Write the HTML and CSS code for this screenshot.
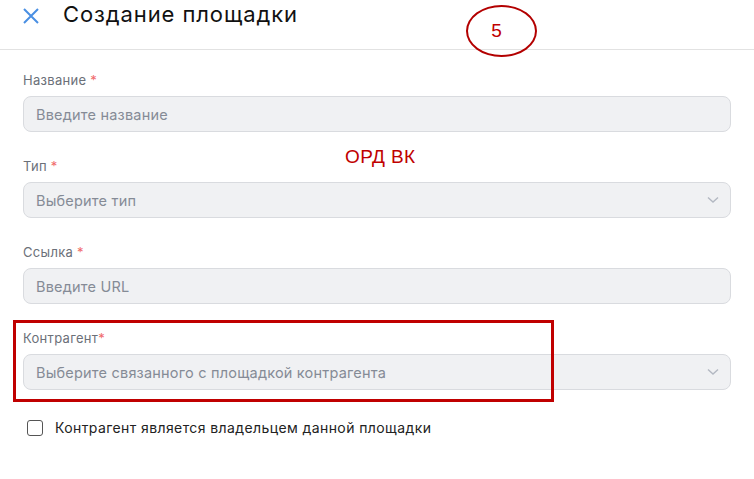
FILE: index.html
```html
<!DOCTYPE html>
<html lang="ru">
<head>
<meta charset="utf-8">
<link rel="stylesheet" href="styles.css">
</head>
<body>
<div class="page">
  <header class="header">
    <svg class="close" width="16" height="16" viewBox="0 0 16 16"><path d="M1 1 L15 15 M15 1 L1 15" stroke="#4a8fe3" stroke-width="2" fill="none"/></svg>
    <h1 class="title">Создание площадки</h1>
  </header>
  <form class="form">
    <div class="field">
      <label class="label">Название <span class="req">*</span></label>
      <div class="input"><span class="ph">Введите название</span></div>
    </div>
    <div class="field">
      <label class="label">Тип <span class="req">*</span></label>
      <div class="input select"><span class="ph">Выберите тип</span><svg class="chev" width="12" height="8" viewBox="0 0 12 8"><path d="M1 1.5 L6 6 L11 1.5" stroke="#b3b8c2" stroke-width="1.4" fill="none"/></svg></div>
    </div>
    <div class="field">
      <label class="label">Ссылка <span class="req">*</span></label>
      <div class="input"><span class="ph">Введите URL</span></div>
    </div>
    <div class="field">
      <label class="label">Контрагент<span class="req">*</span></label>
      <div class="input select"><span class="ph">Выберите связанного с площадкой контрагента</span><svg class="chev" width="12" height="8" viewBox="0 0 12 8"><path d="M1 1.5 L6 6 L11 1.5" stroke="#b3b8c2" stroke-width="1.4" fill="none"/></svg></div>
    </div>
    <label class="check"><span class="box"></span><span class="check-text">Контрагент является владельцем данной площадки</span></label>
  </form>
  <div class="note-ellipse"><span>5</span></div>
  <div class="note-text">ОРД ВК</div>
  <div class="note-box"></div>
</div>
</body>
</html>
```
FILE: styles.css
```css
html, body {
  margin: 0;
  padding: 0;
  background: #fff;
}
.page {
  position: relative;
  width: 754px;
  height: 479px;
  overflow: hidden;
  font-family: "Inter", "Noto Sans", sans-serif;
}
.header {
  height: 49px;
  border-bottom: 1px solid #e2e2e2;
  display: flex;
  align-items: flex-start;
  padding: 0 0 0 23px;
  box-sizing: content-box;
}
.close {
  margin-top: 8px;
  flex: none;
}
.title {
  margin: 0 0 0 24px;
  font-size: 22px;
  font-weight: 400;
  line-height: 29px;
  color: #111;
  letter-spacing: 0.9px;
}
.form {
  padding: 22px 23px 0 23px;
  display: flex;
  flex-direction: column;
}
.field {
  display: flex;
  flex-direction: column;
  margin-bottom: 26px;
}
.label {
  font-size: 13px;
  line-height: 16px;
  color: #6b7079;
  margin-bottom: 8px;
  letter-spacing: 0.3px;
}
.req {
  color: #f06a6a;
}
.input {
  height: 36px;
  box-sizing: border-box;
  width: 708px;
  background: #f0f1f3;
  border: 1px solid #d9dbdf;
  border-radius: 8px;
  display: flex;
  align-items: center;
  padding: 0 11px 0 12px;
}
.ph {
  font-size: 14.5px;
  color: #858b96;
  flex: 1;
  letter-spacing: 0.2px;
}
.chev {
  flex: none;
}
.check {
  display: flex;
  align-items: center;
  margin-top: 3px;
  padding-left: 4px;
}
.box {
  width: 14px;
  height: 14px;
  border: 1.5px solid #555;
  border-radius: 3px;
  flex: none;
}
.check-text {
  margin-left: 12px;
  font-size: 14px;
  color: #222;
  letter-spacing: 0.4px;
}
.note-ellipse {
  position: absolute;
  left: 466px;
  top: 5px;
  width: 71px;
  height: 52px;
  box-sizing: border-box;
  border: 2.5px solid #b30000;
  border-radius: 50%;
  display: flex;
  align-items: center;
  justify-content: center;
  padding-right: 10px;
  font-family: "Liberation Sans", Arial, sans-serif;
  font-size: 19px;
  color: #c00000;
}
.note-text {
  position: absolute;
  left: 345px;
  top: 146px;
  font-family: "Liberation Sans", Arial, sans-serif;
  font-size: 19px;
  letter-spacing: 0.4px;
  color: #c00000;
}
.note-box {
  position: absolute;
  left: 13px;
  top: 320px;
  width: 541px;
  height: 82px;
  box-sizing: border-box;
  border: 3px solid #c00000;
}
```
